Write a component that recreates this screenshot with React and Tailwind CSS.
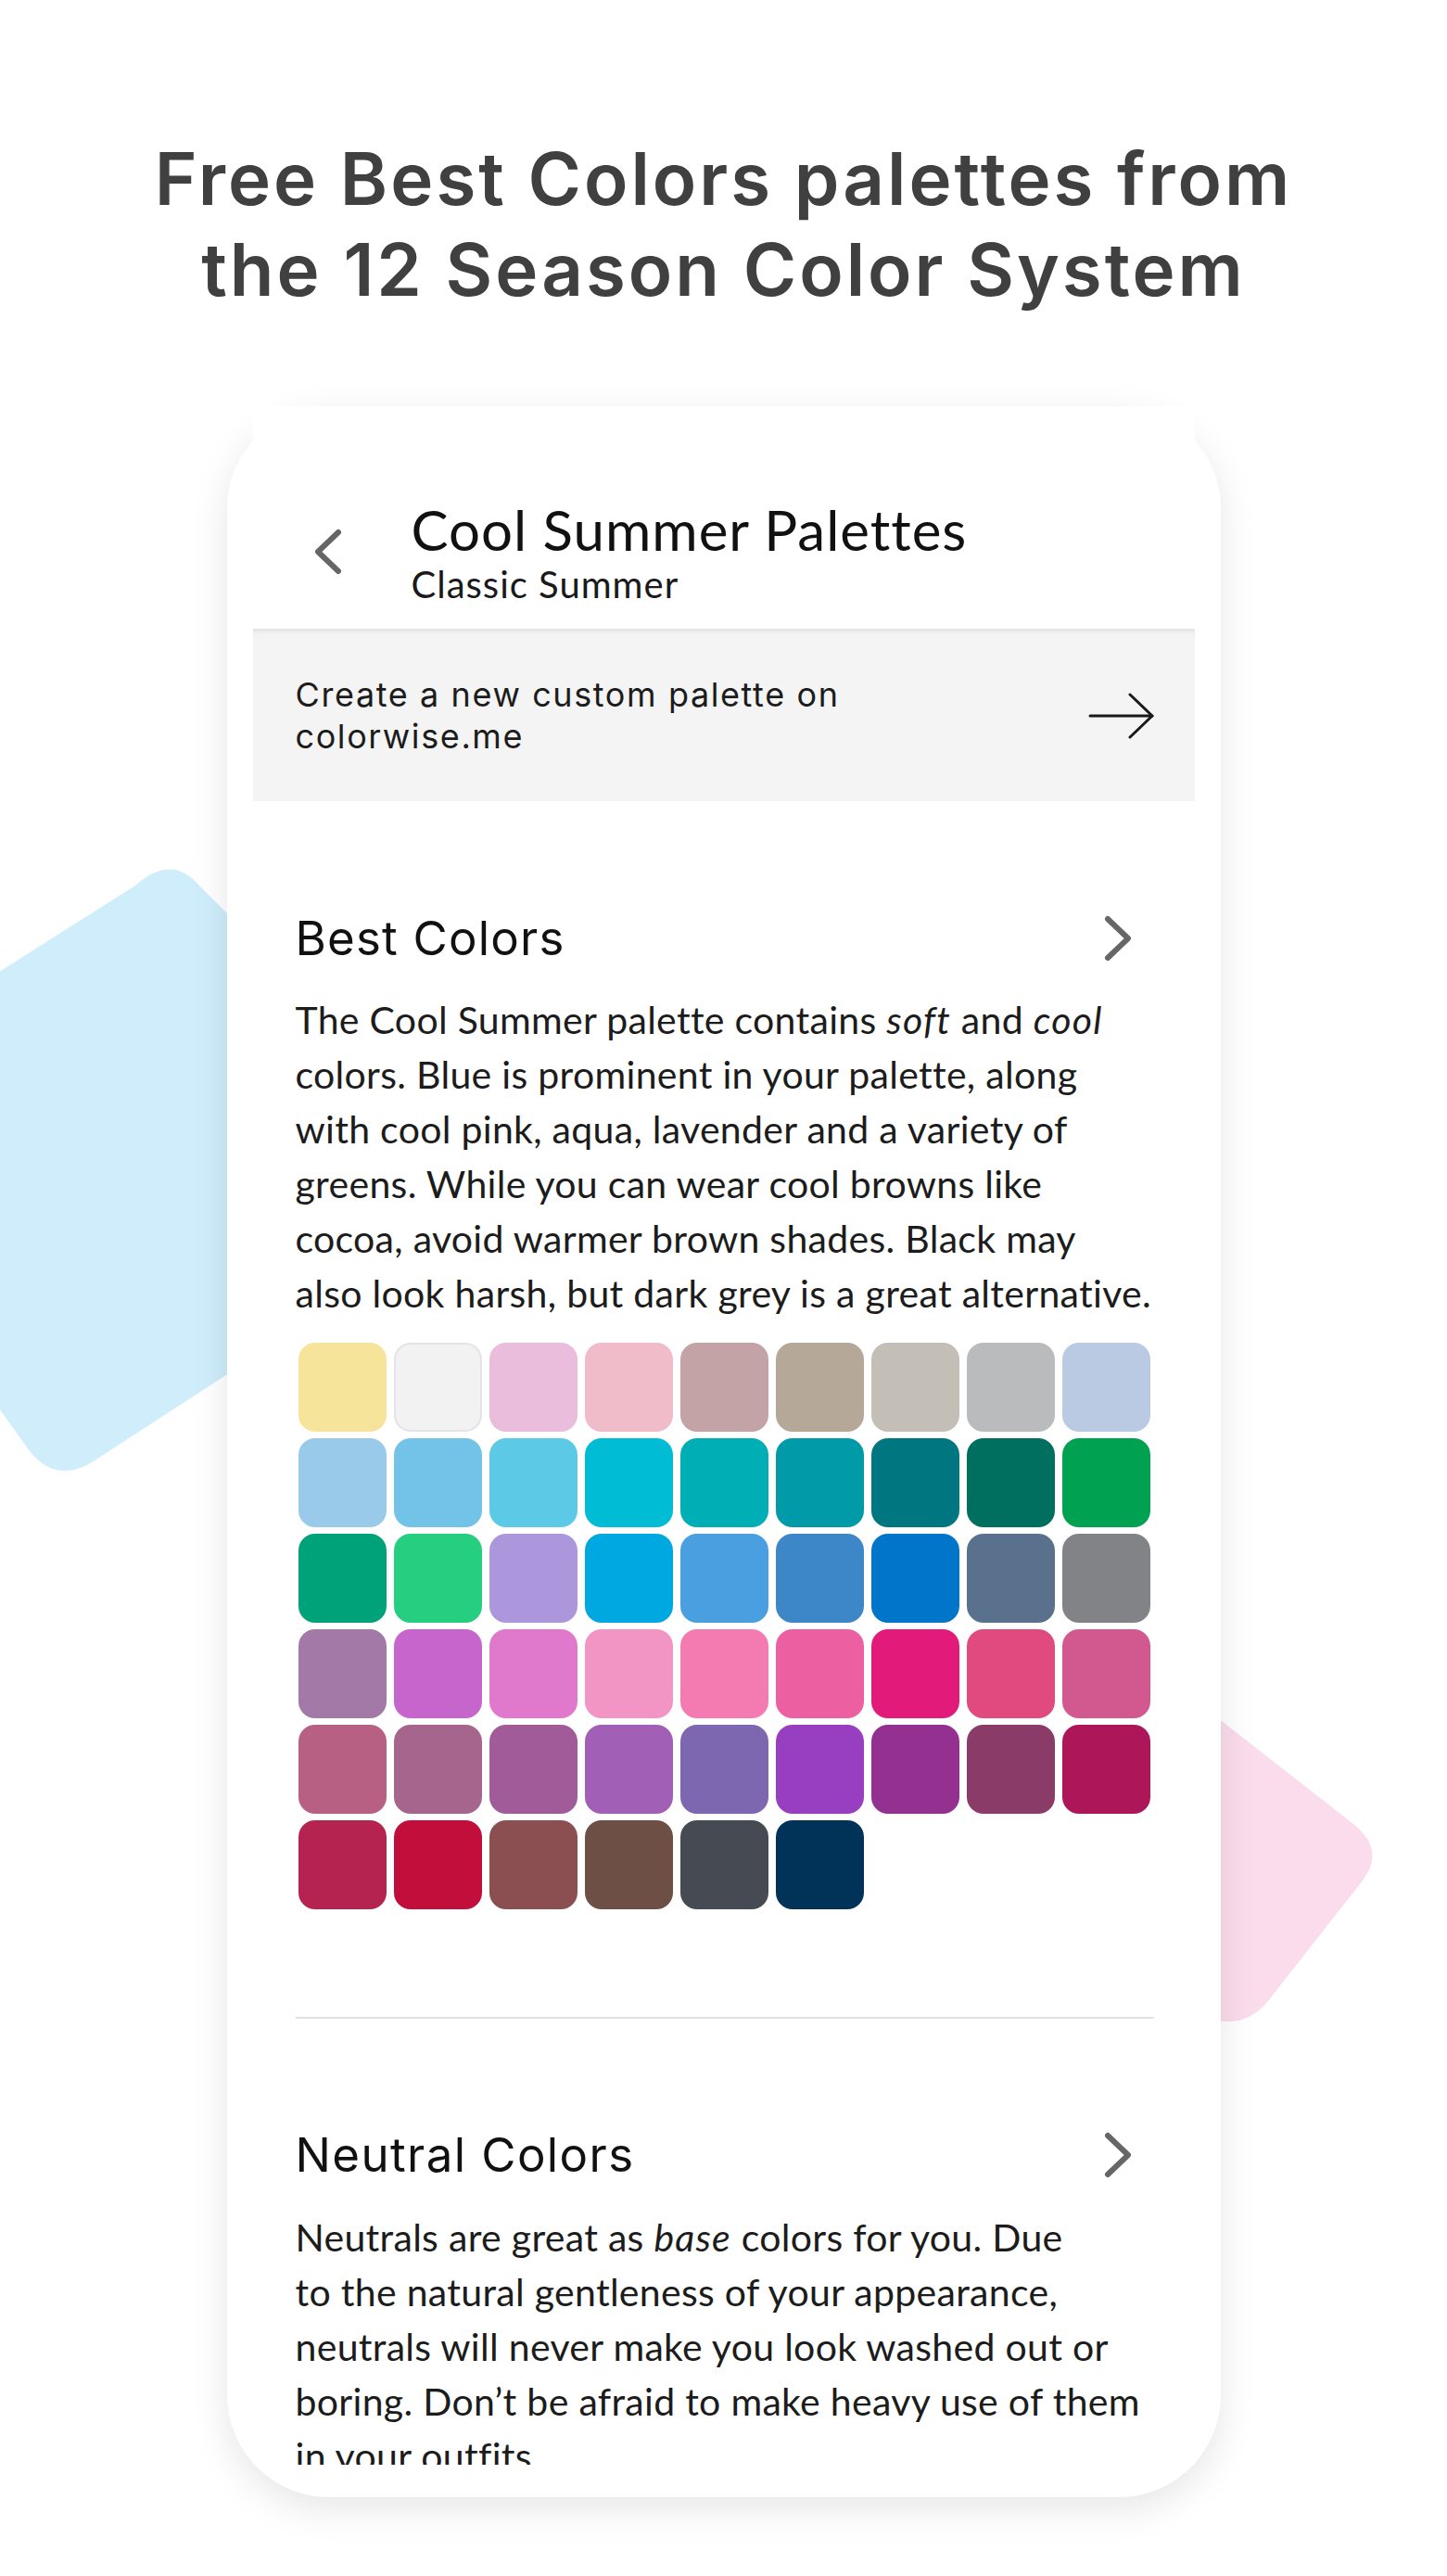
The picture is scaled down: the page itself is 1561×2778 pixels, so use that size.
import React from "react";

const swatches = [
  "#f7e49b", "#f2f2f2", "#e9bddb", "#f0bcc9", "#c4a3a7", "#b5a899", "#c3bfb7", "#b9bbbd", "#b9cae2",
  "#9acaea", "#73c2e8", "#5ccae7", "#00bdd5", "#00aeb6", "#009aa9", "#007681", "#006f5f", "#00a151",
  "#00a279", "#26cf7f", "#ad97dc", "#00a8e2", "#4a9fe0", "#3d87c9", "#0075c9", "#5a718e", "#828387",
  "#a379a7", "#c666cd", "#e079cc", "#f295c5", "#f47bb1", "#ec5fa0", "#e21b7b", "#e04a7e", "#d1598f",
  "#b85f84", "#a6658c", "#a05b98", "#a160b6", "#7e67b1", "#983ec0", "#933090", "#8a3b68", "#ad1759",
  "#b52450", "#c20e3b", "#8b4f51", "#6d4f46", "#464b53", "#013258",
];

function Chevron({ dir = "right" }) {
  const pts = dir === "right" ? "6,5 28,26 6,47" : "28,5 6,26 28,47";
  return (
    <svg width="34" height="52" viewBox="0 0 34 52" className="shrink-0">
      <polyline points={pts} fill="none" stroke="#666666" strokeWidth="6" strokeLinecap="round" strokeLinejoin="round" />
    </svg>
  );
}

function Line({ children }) {
  return <span className="block whitespace-nowrap">{children}</span>;
}

export default function App() {
  return (
    <div className="relative w-full h-[2778px] bg-white overflow-hidden">
      <svg className="absolute left-0 top-0 pointer-events-none" width="1561" height="2778" viewBox="0 0 1561 2778">
        <path
          d="M -80 1098 L 146 955 Q 185 920 215 955 L 330 1070 L 330 1427 L 99 1577 Q 60 1600 32 1565 L -50 1450 Z"
          fill="#cfedfb"
        />
        <path
          d="M 1240 1795 L 1460 1967 Q 1495 1995 1470 2028 L 1368 2158 Q 1350 2180 1325 2180 L 1240 2180 Z"
          fill="#fbdcec"
        />
      </svg>

      <div className="relative flex flex-col items-center">
        <h1 className="pt-[144px] text-center text-[78px] leading-[98px] font-semibold text-[#404040] font-['Inter',sans-serif] tracking-[3px]">
          Free Best Colors palettes from
          <br />
          the 12 Season Color System
        </h1>

        <div className="mt-[98px] w-[1072px] h-[2255px] rounded-[110px] bg-white px-[28px] pb-[35px] shadow-[0_12px_40px_rgba(0,0,0,0.10)]">
          <div className="h-full overflow-hidden bg-white">
            {/* Header */}
            <div className="flex items-center pt-[98px] pb-[24px] pl-[64px]">
              <Chevron dir="left" />
              <div className="ml-[73px] font-['Lato',sans-serif]">
                <div className="text-[60px] leading-[1.17] tracking-[1px] text-[#111111]">Cool Summer Palettes</div>
                <div className="text-[40px] leading-[1.2] tracking-[1px] text-[#1a1a1a]">Classic Summer</div>
              </div>
            </div>

            {/* Banner */}
            <div className="flex items-center justify-between bg-[#f4f4f4] pl-[46px] pr-[43px] pt-[49px] pb-[47px] shadow-[inset_0_8px_6px_-6px_rgba(0,0,0,0.10)]">
              <div className="text-[36px] leading-[45px] tracking-[1.6px] text-[#1c1c1c] font-['Inter',sans-serif]">
                Create a new custom palette on
                <br />
                colorwise.me
              </div>
              <svg width="72" height="52" viewBox="0 0 72 52">
                <line x1="2" y1="26" x2="69" y2="26" stroke="#1a1a1a" strokeWidth="3" strokeLinecap="round" />
                <polyline points="45,3 69,26 45,49" fill="none" stroke="#1a1a1a" strokeWidth="3" strokeLinecap="round" strokeLinejoin="round" />
              </svg>
            </div>

            {/* Sections */}
            <div className="pl-[46px] pr-[44px] pt-[117px]">
              <div className="flex items-center justify-between pr-[22px] h-[62px]">
                <h2 className="text-[51px] leading-[62px] tracking-[1.2px] text-[#111111] font-['Inter',sans-serif]">Best Colors</h2>
                <Chevron />
              </div>
              <p className="mt-[27px] text-[41px] leading-[59px] tracking-[0.3px] text-[#1c1c1c] font-['Lato',sans-serif]">
                <Line>
                  The Cool Summer palette contains <i className="tracking-[1.2px]">soft</i> and <i className="tracking-[1.2px]">cool</i>
                </Line>
                <Line>colors. Blue is prominent in your palette, along</Line>
                <Line>with cool pink, aqua, lavender and a variety of</Line>
                <Line>greens. While you can wear cool browns like</Line>
                <Line>cocoa, avoid warmer brown shades. Black may</Line>
                <Line>also look harsh, but dark grey is a great alternative.</Line>
              </p>

              <div className="mt-[24px] ml-[3px] grid grid-cols-[repeat(9,95px)] auto-rows-[96px] gap-x-[8px] gap-y-[7px]">
                {swatches.map((c, i) => (
                  <div
                    key={i}
                    className={
                      i === 1
                        ? "rounded-[18px] border-2 border-[#e4e4e4]"
                        : "rounded-[18px]"
                    }
                    style={{ backgroundColor: c }}
                  />
                ))}
              </div>

              <div className="mt-[116px] h-[2px] bg-[#e2e2e2]" />

              <div className="mt-[116px] flex items-center justify-between pr-[22px] h-[62px]">
                <h2 className="text-[51px] leading-[62px] tracking-[1.4px] text-[#111111] font-['Inter',sans-serif]">Neutral Colors</h2>
                <Chevron />
              </div>
              <p className="mt-[28px] text-[41px] leading-[59px] tracking-[0.3px] text-[#1c1c1c] font-['Lato',sans-serif]">
                <Line>
                  Neutrals are great as <i className="tracking-[1.2px]">base</i> colors for you. Due
                </Line>
                <Line>to the natural gentleness of your appearance,</Line>
                <Line>neutrals will never make you look washed out or</Line>
                <Line>boring. Don’t be afraid to make heavy use of them</Line>
                <Line>in your outfits.</Line>
              </p>
            </div>
          </div>
        </div>
      </div>
    </div>
  );
}
